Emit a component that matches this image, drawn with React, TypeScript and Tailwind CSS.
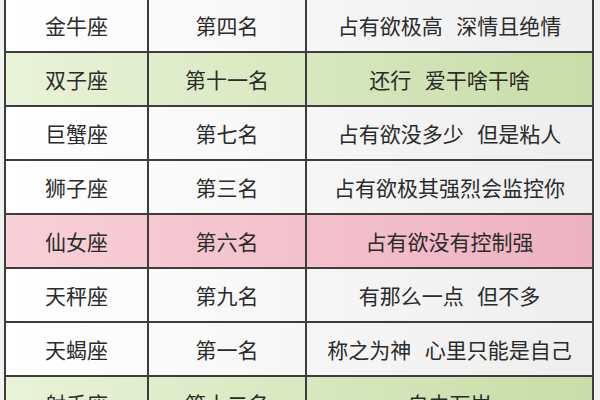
import React from 'react';

type Row = {
    sign: string;
    rank: string;
    note: string;
    tone: 'white' | 'green' | 'pink';
};

const rows: Row[] = [
    { sign: '金牛座', rank: '第四名', note: '占有欲极高 深情且绝情', tone: 'white' },
    { sign: '双子座', rank: '第十一名', note: '还行 爱干啥干啥', tone: 'green' },
    { sign: '巨蟹座', rank: '第七名', note: '占有欲没多少 但是粘人', tone: 'white' },
    { sign: '狮子座', rank: '第三名', note: '占有欲极其强烈会监控你', tone: 'white' },
    { sign: '仙女座', rank: '第六名', note: '占有欲没有控制强', tone: 'pink' },
    { sign: '天秤座', rank: '第九名', note: '有那么一点 但不多', tone: 'white' },
    { sign: '天蝎座', rank: '第一名', note: '称之为神 心里只能是自己', tone: 'white' },
    { sign: '射手座', rank: '第十二名', note: '自由万岁', tone: 'green' },
];

const toneClass: Record<Row['tone'], string> = {
    white: 'bg-gradient-to-r from-[#ffffff] to-[#eeeeee]',
    green: 'bg-gradient-to-r from-[#e9f3d8] to-[#c8dda8]',
    pink: 'bg-gradient-to-r from-[#f8d0d8] to-[#eeb2c2]',
};

export default function App() {
    return (
        <div
            className="w-[600px] h-[400px] overflow-hidden bg-[#f1f1f1] pl-[4px] text-[#2b2b2b]"
            style={{ fontFamily: '"Noto Sans CJK SC", "Noto Sans", sans-serif' }}
        >
            <div className="w-[590px] -mt-px border-x-2 border-[#3d3d3d]">
                {rows.map((row) => (
                    <div
                        key={row.sign}
                        className={`grid grid-cols-[143px_158px_1fr] h-[54px] border-b-2 border-[#3d3d3d] text-[21px] leading-none ${toneClass[row.tone]}`}
                    >
                        <div className="flex items-center justify-center border-r-2 border-[#3d3d3d]">
                            {row.sign}
                        </div>
                        <div className="flex items-center justify-center border-r-2 border-[#3d3d3d]">
                            {row.rank}
                        </div>
                        <div className="flex items-center justify-center [word-spacing:9px]">
                            {row.note}
                        </div>
                    </div>
                ))}
            </div>
        </div>
    );
}
